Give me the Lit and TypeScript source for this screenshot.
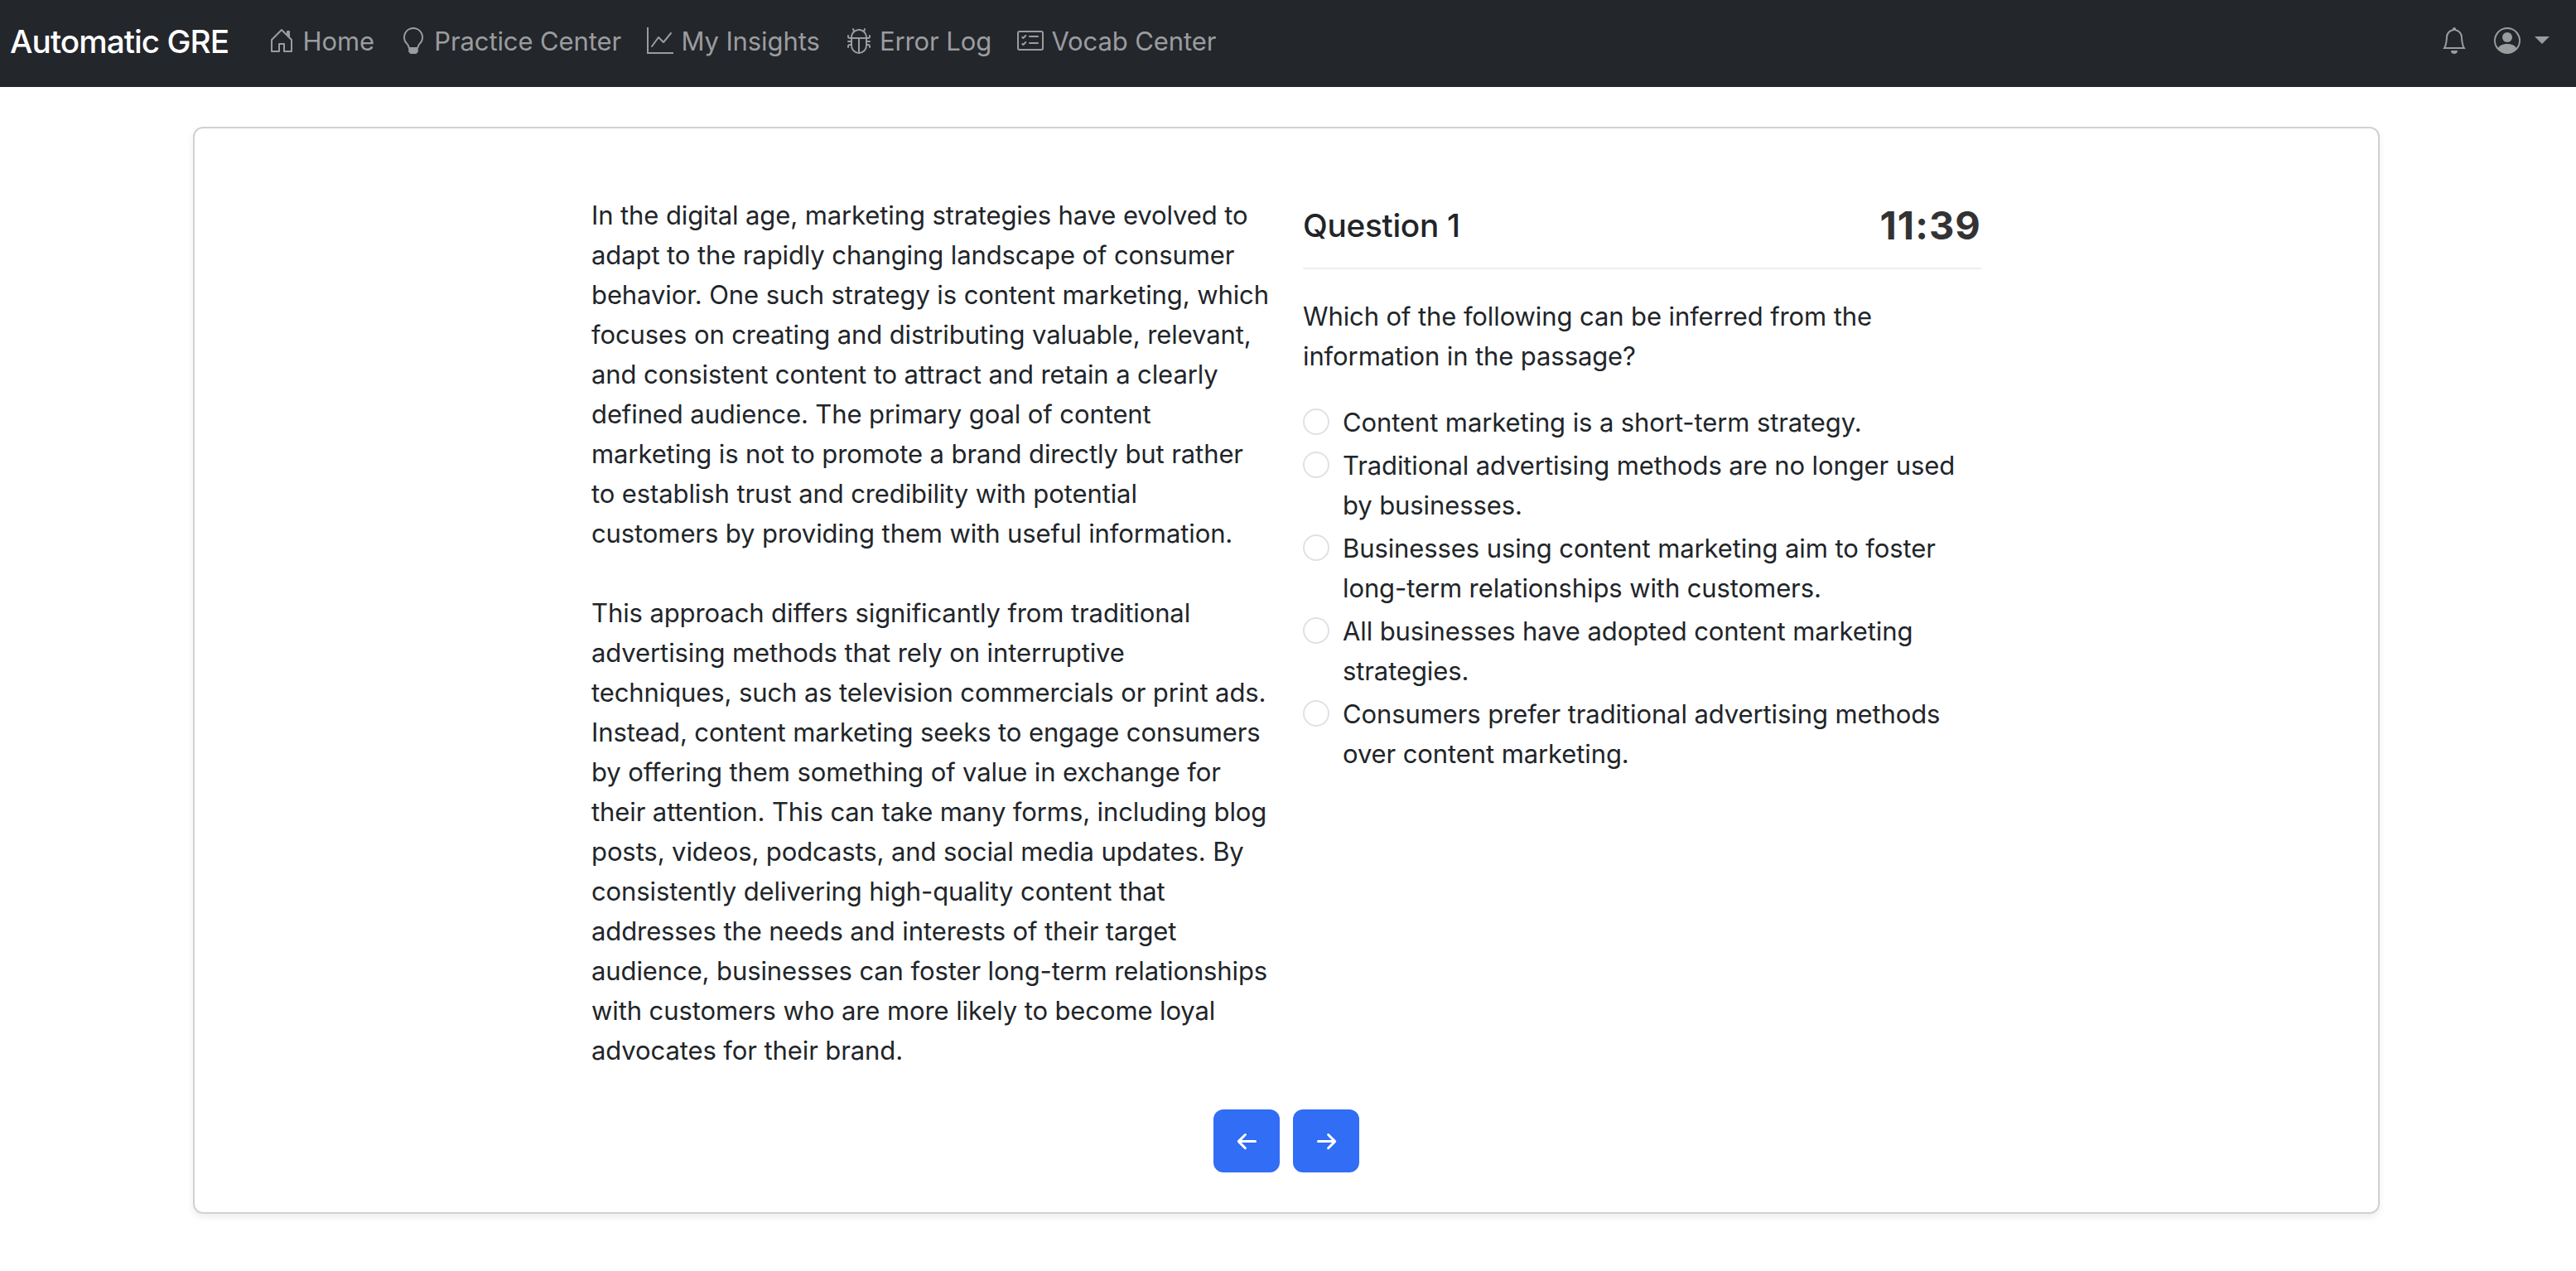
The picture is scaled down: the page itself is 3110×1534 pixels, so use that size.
import { LitElement, css, html, svg } from 'lit';
import { customElement, property } from 'lit/decorators.js';

const icons = {
  home: svg`<path d="M8.354 1.146a.5.5 0 0 0-.708 0l-6 6A.5.5 0 0 0 1.5 7.5v7a.5.5 0 0 0 .5.5h4.5a.5.5 0 0 0 .5-.5v-4h2v4a.5.5 0 0 0 .5.5H14a.5.5 0 0 0 .5-.5v-7a.5.5 0 0 0-.146-.354L13 5.793V2.5a.5.5 0 0 0-.5-.5h-1a.5.5 0 0 0-.5.5v1.293L8.354 1.146zM2.5 14V7.707l5.5-5.5 5.5 5.5V14H10v-4a.5.5 0 0 0-.5-.5h-3a.5.5 0 0 0-.5.5v4H2.5z" />`,
  bulb: svg`<path d="M2 6a6 6 0 1 1 10.174 4.31c-.203.196-.359.4-.453.619l-.762 1.769A.5.5 0 0 1 10.5 13a.5.5 0 0 1 0 1 .5.5 0 0 1 0 1l-.224.447a1 1 0 0 1-.894.553H6.618a1 1 0 0 1-.894-.553L5.5 15a.5.5 0 0 1 0-1 .5.5 0 0 1 0-1 .5.5 0 0 1-.46-.302l-.761-1.77a1.964 1.964 0 0 0-.453-.618A5.984 5.984 0 0 1 2 6zm6-5a5 5 0 0 0-3.479 8.592c.263.254.514.564.676.941L5.83 12h4.342l.632-1.467c.162-.377.413-.687.676-.941A5 5 0 0 0 8 1z" />`,
  graph: svg`<path fill-rule="evenodd" d="M0 0h1v15h15v1H0V0Zm14.817 3.113a.5.5 0 0 1 .07.704l-4.5 5.5a.5.5 0 0 1-.74.037L7.06 6.767l-3.656 5.027a.5.5 0 0 1-.808-.588l4-5.5a.5.5 0 0 1 .758-.06l2.609 2.61 4.15-5.073a.5.5 0 0 1 .704-.07Z" />`,
  bug: svg`<path d="M4.355.522a.5.5 0 0 1 .623.333l.291.956A4.979 4.979 0 0 1 8 1c1.007 0 1.946.298 2.731.811l.29-.956a.5.5 0 1 1 .957.29l-.41 1.352A4.985 4.985 0 0 1 13 6h.5a.5.5 0 0 0 .5-.5V5a.5.5 0 0 1 1 0v.5A1.5 1.5 0 0 1 13.5 7H13v1h1.5a.5.5 0 0 1 0 1H13v1h.5a1.5 1.5 0 0 1 1.5 1.5v.5a.5.5 0 1 1-1 0v-.5a.5.5 0 0 0-.5-.5H13a5 5 0 0 1-10 0h-.5a.5.5 0 0 0-.5.5v.5a.5.5 0 1 1-1 0v-.5A1.5 1.5 0 0 1 2.5 10H3V9H1.5a.5.5 0 0 1 0-1H3V7h-.5A1.5 1.5 0 0 1 1 5.5V5a.5.5 0 0 1 1 0v.5a.5.5 0 0 0 .5.5H3c0-1.364.547-2.601 1.432-3.503l-.41-1.352a.5.5 0 0 1 .333-.623zM4 7v4a4 4 0 0 0 3.5 3.97V7H4zm4.5 0v7.97A4 4 0 0 0 12 11V7H8.5zM12 6a3.989 3.989 0 0 0-1.334-2.982A3.983 3.983 0 0 0 8 2a3.983 3.983 0 0 0-2.667 1.018A3.989 3.989 0 0 0 4 6h8z" />`,
  checklist: svg`
    <path d="M14.5 3a.5.5 0 0 1 .5.5v9a.5.5 0 0 1-.5.5h-13a.5.5 0 0 1-.5-.5v-9a.5.5 0 0 1 .5-.5h13zm-13-1A1.5 1.5 0 0 0 0 3.5v9A1.5 1.5 0 0 0 1.5 14h13a1.5 1.5 0 0 0 1.5-1.5v-9A1.5 1.5 0 0 0 14.5 2h-13z" />
    <path d="M7 5.5a.5.5 0 0 1 .5-.5h5a.5.5 0 0 1 0 1h-5a.5.5 0 0 1-.5-.5zm-1.496-.854a.5.5 0 0 1 0 .708l-1.5 1.5a.5.5 0 0 1-.708 0l-.5-.5a.5.5 0 1 1 .708-.708l.146.147 1.146-1.147a.5.5 0 0 1 .708 0zM7 9.5a.5.5 0 0 1 .5-.5h5a.5.5 0 0 1 0 1h-5a.5.5 0 0 1-.5-.5zm-1.496-.854a.5.5 0 0 1 0 .708l-1.5 1.5a.5.5 0 0 1-.708 0l-.5-.5a.5.5 0 0 1 .708-.708l.146.147 1.146-1.147a.5.5 0 0 1 .708 0z" />`,
  bell: svg`<path d="M8 16a2 2 0 0 0 2-2H6a2 2 0 0 0 2 2zM8 1.918l-.797.161A4.002 4.002 0 0 0 4 6c0 .628-.134 2.197-.459 3.742-.16.767-.376 1.566-.663 2.258h10.244c-.287-.692-.502-1.49-.663-2.258C12.134 8.197 12 6.628 12 6a4.002 4.002 0 0 0-3.203-3.92L8 1.917zM14.22 12c.223.447.481.801.78 1H1c.299-.199.557-.553.78-1C2.68 10.2 3 6.88 3 6c0-2.42 1.72-4.44 4.005-4.901a1 1 0 1 1 1.99 0A5.002 5.002 0 0 1 13 6c0 .88.32 4.2 1.22 6z" />`,
  person: svg`
    <path d="M11 6a3 3 0 1 1-6 0 3 3 0 0 1 6 0z" />
    <path fill-rule="evenodd" d="M0 8a8 8 0 1 1 16 0A8 8 0 0 1 0 8zm8-7a7 7 0 0 0-5.468 11.37C3.242 11.226 4.805 10 8 10s4.757 1.225 5.468 2.37A7 7 0 0 0 8 1z" />`,
};

type IconName = keyof typeof icons;

@customElement('gre-icon')
export class GreIcon extends LitElement {
  static styles = css`
    :host {
      display: block;
      width: 32px;
      height: 32px;
    }

    svg {
      display: block;
      width: 100%;
      height: 100%;
      fill: currentColor;
    }
  `;

  @property() name: IconName = 'home';

  render() {
    return html`<svg viewBox="0 0 16 16" aria-hidden="true">${icons[this.name]}</svg>`;
  }
}

const links: { icon: IconName; label: string }[] = [
  { icon: 'home', label: 'Home' },
  { icon: 'bulb', label: 'Practice Center' },
  { icon: 'graph', label: 'My Insights' },
  { icon: 'bug', label: 'Error Log' },
  { icon: 'checklist', label: 'Vocab Center' },
];

@customElement('gre-navbar')
export class GreNavbar extends LitElement {
  static styles = css`
    :host {
      display: block;
    }

    nav {
      box-sizing: border-box;
      display: flex;
      align-items: center;
      height: 105px;
      padding: 0 32px 5px 12px;
      background: #23262b;
      color: #9b9c9e;
    }

    a {
      color: inherit;
      text-decoration: none;
      white-space: nowrap;
    }

    .brand {
      margin-right: 48px;
      color: #fff;
      font-size: 38.75px;
      font-weight: 450;
      line-height: 60px;
      letter-spacing: -0.95px;
    }

    .links {
      display: flex;
      gap: 31px;
    }

    .link {
      display: flex;
      align-items: center;
      gap: 9.3px;
    }

    gre-icon {
      margin-bottom: 2px;
    }

    .actions {
      display: flex;
      align-items: center;
      margin-left: auto;
      gap: 32px;
    }

    .account {
      display: flex;
      align-items: center;
      gap: 17px;
    }

    .caret {
      border-top: 9.6px solid;
      border-right: 9.6px solid transparent;
      border-left: 9.6px solid transparent;
      margin-bottom: 3px;
    }
  `;

  render() {
    return html`
      <nav>
        <a class="brand" href="#">Automatic GRE</a>
        <div class="links">
          ${links.map(
            (link) => html`
              <a class="link" href="#"><gre-icon name=${link.icon}></gre-icon>${link.label}</a>
            `,
          )}
        </div>
        <div class="actions">
          <a href="#" aria-label="Notifications"><gre-icon name="bell"></gre-icon></a>
          <a class="account" href="#" aria-label="Account">
            <gre-icon name="person"></gre-icon>
            <span class="caret"></span>
          </a>
        </div>
      </nav>
    `;
  }
}

const passage = [
  'In the digital age, marketing strategies have evolved to adapt to the rapidly changing landscape of consumer behavior. One such strategy is content marketing, which focuses on creating and distributing valuable, relevant, and consistent content to attract and retain a clearly defined audience. The primary goal of content marketing is not to promote a brand directly but rather to establish trust and credibility with potential customers by providing them with useful information.',
  'This approach differs significantly from traditional advertising methods that rely on interruptive techniques, such as television commercials or print ads. Instead, content marketing seeks to engage consumers by offering them something of value in exchange for their attention. This can take many forms, including blog posts, videos, podcasts, and social media updates. By consistently delivering high-quality content that addresses the needs and interests of their target audience, businesses can foster long-term relationships with customers who are more likely to become loyal advocates for their brand.',
];

const choices = [
  'Content marketing is a short-term strategy.',
  'Traditional advertising methods are no longer used by businesses.',
  'Businesses using content marketing aim to foster long-term relationships with customers.',
  'All businesses have adopted content marketing strategies.',
  'Consumers prefer traditional advertising methods over content marketing.',
];

@customElement('gre-question')
export class GreQuestion extends LitElement {
  static styles = css`
    :host {
      display: block;
    }

    header {
      box-sizing: border-box;
      display: flex;
      align-items: center;
      justify-content: space-between;
      height: 89px;
      padding-bottom: 16px;
      border-bottom: 2px solid #eee;
    }

    h5 {
      margin: 0;
      font-size: 38.75px;
      font-weight: 500;
      letter-spacing: -0.3px;
    }

    .timer {
      color: #333;
      font-size: 47px;
      font-weight: 700;
      letter-spacing: 1.1px;
    }

    .prompt {
      margin: 33px 0 32px;
    }

    .choice {
      display: flex;
      gap: 16px;
      margin-bottom: 4px;
    }

    input {
      appearance: none;
      box-sizing: border-box;
      flex: none;
      width: 32px;
      height: 32px;
      margin: 7px 0 0;
      border: 2px solid #dee2e6;
      border-radius: 50%;
      background: #fff;
    }
  `;

  @property() heading = '';
  @property() time = '';
  @property() prompt = '';

  render() {
    return html`
      <header>
        <h5>${this.heading}</h5>
        <span class="timer">${this.time}</span>
      </header>
      <p class="prompt">${this.prompt}</p>
      ${choices.map(
        (choice) => html`
          <label class="choice"><input type="radio" name="choice" /><span>${choice}</span></label>
        `,
      )}
    `;
  }
}

@customElement('app-root')
export class AppRoot extends LitElement {
  static styles = css`
    :host {
      display: block;
      min-height: 1534px;
      background: #fff;
      color: #212529;
      font: 400 31px/48px Inter, 'Liberation Sans', sans-serif;
      letter-spacing: -0.1px;
    }

    .card {
      box-sizing: border-box;
      width: 2640px;
      margin: 48px 0 0 233px;
      padding: 81px 0 48px;
      border: 2px solid #d0d1d2;
      border-radius: 12px;
      box-shadow: 0 4px 8px rgba(0, 0, 0, 0.075);
    }

    .columns {
      display: grid;
      grid-template-columns: 819px 819px;
      gap: 40px;
      justify-content: center;
    }

    .passage p {
      margin: 0 0 48px;
    }

    .passage p:last-child {
      margin-bottom: 0;
    }

    .pager {
      display: flex;
      justify-content: center;
      gap: 16px;
      margin-top: 47px;
    }

    button {
      display: flex;
      align-items: center;
      justify-content: center;
      width: 80px;
      height: 76px;
      padding: 0;
      border: 0;
      border-radius: 12px;
      background: #316df5;
      color: #fff;
    }

    .arrow {
      width: 32px;
      height: 32px;
      fill: none;
      stroke: currentColor;
      stroke-width: 3;
      stroke-linecap: round;
      stroke-linejoin: round;
    }
  `;

  render() {
    return html`
      <gre-navbar></gre-navbar>
      <main class="card">
        <div class="columns">
          <div class="passage">${passage.map((text) => html`<p>${text}</p>`)}</div>
          <gre-question
            heading="Question 1"
            time="11:39"
            prompt="Which of the following can be inferred from the information in the passage?"
          ></gre-question>
        </div>
        <div class="pager">
          <button aria-label="Previous">
            <svg class="arrow" viewBox="0 0 32 32"><path d="M26.5 16.6H6.3M14.4 8.5L6.3 16.6l8.1 8.1" /></svg>
          </button>
          <button aria-label="Next">
            <svg class="arrow" viewBox="0 0 32 32"><path d="M6.5 16.6h20.2M18.6 8.5l8.1 8.1-8.1 8.1" /></svg>
          </button>
        </div>
      </main>
    `;
  }
}

declare global {
  interface HTMLElementTagNameMap {
    'app-root': AppRoot;
    'gre-icon': GreIcon;
    'gre-navbar': GreNavbar;
    'gre-question': GreQuestion;
  }
}
